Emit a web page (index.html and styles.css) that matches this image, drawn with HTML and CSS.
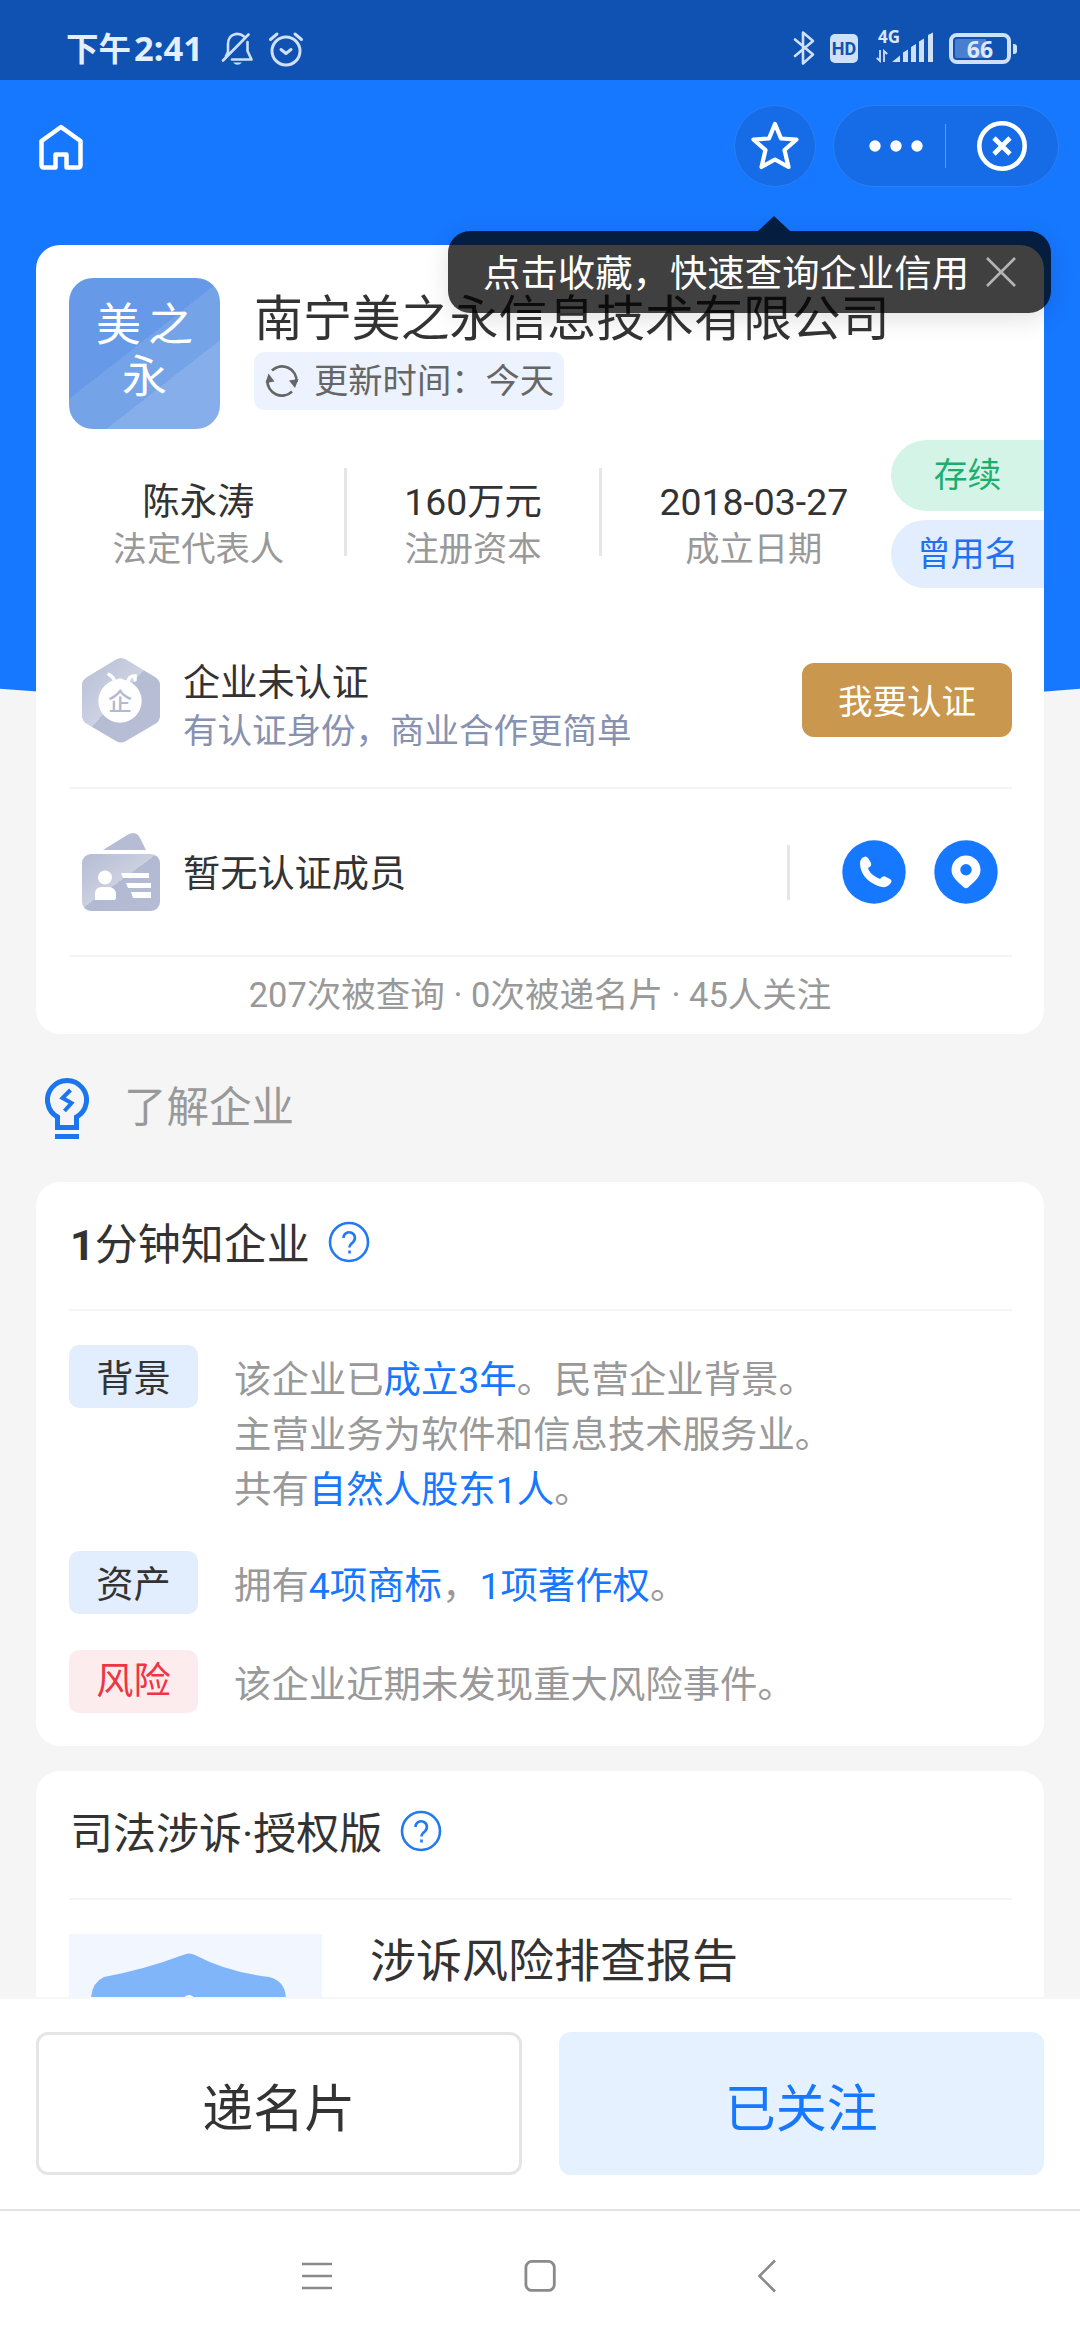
FILE: index.html
```html
<!DOCTYPE html>
<html lang="zh-CN">
<head>
<meta charset="utf-8">
<title>企业信用</title>
<link rel="stylesheet" href="styles.css">
</head>
<body>
<div class="app">
  <header class="status">
    <div class="status-left">
      <span class="clock">下午<b>2:41</b></span>
      <svg class="bell" width="32" height="34" viewBox="0 0 32 34" fill="none" stroke="#cfe0fb" stroke-width="2.6" stroke-linecap="round" stroke-linejoin="round"><path d="M23 4.500C17 -.5 7 2 7 12v8l-2 4M26.500 10v9l4 8.500H11M2 28.500L27.500 2.500"/><path d="M12 30.500h9q-4.500 4.500-9 0z" fill="#cfe0fb" stroke="none"/></svg>
      <svg class="alarm" width="36" height="36" viewBox="0 0 36 36" fill="none" stroke="#cfe0fb" stroke-width="3" stroke-linecap="round" stroke-linejoin="round"><circle cx="18" cy="20" r="14"/><path d="M13 18.500l5 4 5-4M2.500 8.500L9 3M33.500 8.500L27 3"/></svg>
    </div>
    <div class="status-right">
      <svg width="22" height="36" viewBox="0 0 22 36" fill="none" stroke="#cfe0fb" stroke-width="2.600" stroke-linejoin="round" stroke-linecap="round"><path d="M2 9.500l18 15-10 9V2.500l10 8.500-18 15"/></svg>
      <span class="hd">HD</span>
      <span class="net"><span class="net-label">4G</span>
        <svg width="58" height="32" viewBox="0 0 58 32" fill="#cfe0fb"><path d="M16 30l8-6.500V30zM27 20.500l5-3V30h-5zM35 15l5-3v18h-5zM43 9.500l5-3V30h-5zM52 3l5-2.500V30h-5z"/><path d="M4 18v11L.8 26M8 30V19l3.200 3" fill="none" stroke="#cfe0fb" stroke-width="1.800"/></svg></span>
      <span class="battery">66</span>
    </div>
  </header>

  <nav class="topbar">
    <svg class="home" width="46" height="48" viewBox="0 0 46 48" fill="none" stroke="#fff" stroke-width="4.500" stroke-linejoin="round" stroke-linecap="round"><path d="M17.500 44.500H6q-2.500 0-2.500-2.500V18L23 4l19.500 14v24q0 2.500-2.500 2.500H28.500M17.500 44.500V31.500h11v13"/></svg>
    <div class="topbar-actions">
      <span class="round-btn">
        <svg width="50" height="52" viewBox="0 0 50 52" fill="none" stroke="#fff" stroke-width="4.200" stroke-linejoin="round"><path d="M25 4l6 14.500 15.500 1L34.500 30l4 17L25 39.500 11.500 47l4-17L3.500 19.500l15.500-1z"/></svg>
      </span>
      <span class="capsule">
        <svg width="54" height="14" viewBox="0 0 54 14" fill="#fff"><circle cx="6" cy="7" r="5.700"/><circle cx="27" cy="7" r="5.700"/><circle cx="48" cy="7" r="5.700"/></svg>
        <i class="capsule-line"></i>
        <svg width="50" height="52" viewBox="0 0 50 52" fill="none" stroke="#fff" stroke-width="4.600"><circle cx="25" cy="26" r="22.700"/><path d="M17 18l16 16M33 18L17 34"/></svg>
      </span>
    </div>
    <div class="tip">
      <span>点击收藏，快速查询企业信用</span>
      <svg width="30" height="30" viewBox="0 0 30 30" fill="none" stroke="#b4b4b4" stroke-width="2.600"><path d="M1 1l28 28M29 1L1 29"/></svg>
    </div>
  </nav>

  <main class="content">
    <section class="card company">
      <div class="company-head">
        <div class="logo">美之<br>永</div>
        <div>
          <h1 class="company-name">南宁美之永信息技术有限公司</h1>
          <div class="updated">
            <svg width="34" height="34" viewBox="0 0 34 34" fill="none" stroke="#666" stroke-width="2.800"><path d="M7 6.500a14.500 14.500 0 0 1 24.500 11.500M27 27.500a14.500 14.500 0 0 1-24.500-11.500"/><path d="M.5 19l3-9.500 6 8zM33.500 15l-3.500 9-6-7.500z" fill="#666" stroke="none"/></svg>
            <span>更新时间：今天</span>
          </div>
        </div>
      </div>
      <div class="facts">
        <div class="fact"><strong>陈永涛</strong><span>法定代表人</span></div>
        <i class="fact-line"></i>
        <div class="fact"><strong>160万元</strong><span>注册资本</span></div>
        <i class="fact-line"></i>
        <div class="fact fact-date"><strong>2018-03-27</strong><span>成立日期</span></div>
        <div class="labels"><span class="label label-green">存续</span><span class="label label-blue">曾用名</span></div>
      </div>
      <div class="row">
        <svg class="row-icon" width="78" height="86" viewBox="0 0 78 86"><defs><linearGradient id="hex" x1="0" y1="0" x2="1" y2="1"><stop offset="0" stop-color="#b7bed6"/><stop offset=".47" stop-color="#cdd2e2"/><stop offset=".47" stop-color="#b5bcd4"/><stop offset="1" stop-color="#b7bed6"/></linearGradient></defs><path d="M34 2.500q5-3 10 0L73 20q5 3 5 8v31q0 5-5 8L44 84q-5 3-10 0L5 67q-5-3-5-8V28q0-5 5-8z" fill="url(#hex)"/><circle cx="38" cy="44" r="21.700" fill="#fff"/><path d="M28 26l10-5 10 5z" fill="#fff"/><path d="M33 26q-1-6-6-8.500M46 26q0-7 7-7v4" fill="none" stroke="#fff" stroke-width="3.600" stroke-linecap="round"/><text x="38" y="53" class="hex-text">企</text></svg>
        <div class="row-text"><strong>企业未认证</strong><span>有认证身份，商业合作更简单</span></div>
        <button class="verify">我要认证</button>
      </div>
      <div class="row row-members">
        <svg class="row-icon" width="78" height="80" viewBox="0 0 78 80"><defs><linearGradient id="idc" x1="0" y1="0" x2="1" y2="1"><stop offset="0" stop-color="#b5bcd4"/><stop offset=".48" stop-color="#cbd0e0"/><stop offset=".48" stop-color="#b2b9d2"/><stop offset="1" stop-color="#b5bcd4"/></linearGradient></defs><path d="M21 18L46 2.500q9-5 13 5.500l5 10z" fill="#b5bcd4"/><rect y="22" width="78" height="57" rx="9" fill="url(#idc)"/><circle cx="23" cy="45.500" r="7" fill="#fff"/><path d="M13 68V62q0-7 7-7h6q8 0 8 8v3q0 2-2 2z" fill="#fff"/><path d="M39 41h28v5H41zM44 51h25v5H46zM49 60h20v6H51z" fill="#fff"/></svg>
        <div class="row-text"><strong>暂无认证成员</strong></div>
        <div class="contacts">
          <i class="contact-line"></i>
          <svg width="64" height="64" viewBox="0 0 64 64"><circle cx="32" cy="32" r="31.700" fill="#1677ff"/><path d="M20 18q4-3 6 0l3 5q1 3-3 5 1 5 8 9l4 2q3-4 6-2l4 2q3 2 0 5-4 5-12 2Q19 39 18 24q0-4 2-6z" fill="#fff"/></svg>
          <svg width="64" height="64" viewBox="0 0 64 64"><circle cx="32" cy="32" r="31.700" fill="#1677ff"/><path fill-rule="evenodd" d="M32 15.500A14.500 14.500 0 0 1 46.500 30c0 6-4 10-12.500 17.500q-2 1.500-4 0C21.500 40 17.500 36 17.500 30A14.500 14.500 0 0 1 32 15.500zM32 24a5.700 5.700 0 1 0 0 11.400A5.700 5.700 0 0 0 32 24z" fill="#fff"/></svg>
        </div>
      </div>
      <p class="counts">207次被查询 · 0次被递名片 · 45人关注</p>
    </section>

    <div class="section-title">
      <svg width="44" height="64" viewBox="0 0 44 64" fill="none" stroke="#1b75ee" stroke-width="5"><path d="M12.500 51.500V41A19.500 19.500 0 1 1 31.500 41v10.500zM10 60.500h24"/><path d="M25.500 14l-8 8 9 5-7 8" stroke-width="4"/></svg>
      <span>了解企业</span>
    </div>

    <section class="card brief">
      <h2 class="card-title"><span><b>1</b>分钟知企业</span>
        <svg class="help" width="42" height="42" viewBox="0 0 42 42" fill="none" stroke="#2379f0" stroke-width="2.600"><circle cx="21" cy="21" r="19"/><path d="M15.500 17a5.700 5.700 0 1 1 9.500 4.200q-3.500 2.800-3.500 5.300"/><path d="M21.500 29.500v3"/></svg></h2>
      <dl class="items">
        <dt>背景</dt><dd>该企业已<em>成立3年</em>。民营企业背景。<br>主营业务为软件和信息技术服务业。<br>共有<em>自然人股东1人</em>。</dd>
        <dt>资产</dt><dd>拥有<em>4项商标</em>，<em>1项著作权</em>。</dd>
        <dt class="risk">风险</dt><dd>该企业近期未发现重大风险事件。</dd>
      </dl>
    </section>

    <section class="card lawsuit">
      <h2 class="card-title"><span>司法涉诉·授权版</span>
        <svg class="help" width="42" height="42" viewBox="0 0 42 42" fill="none" stroke="#2379f0" stroke-width="2.600"><circle cx="21" cy="21" r="19"/><path d="M15.500 17a5.700 5.700 0 1 1 9.500 4.200q-3.500 2.800-3.500 5.300"/><path d="M21.500 29.500v3"/></svg></h2>
      <div class="report">
        <svg width="253" height="190" viewBox="0 0 253 190"><rect width="253" height="190" fill="#f2f7ff"/><path d="M114 21q6-3 12 0 32 17 74 22 17 4 17 23v80H22V66q0-17 13-23 42-8 79-22z" fill="#80b5f9"/><circle cx="120" cy="67" r="6" fill="#fff"/></svg>
        <h3>涉诉风险排查报告</h3>
      </div>
    </section>
  </main>

  <footer class="actions">
    <button class="action">递名片</button>
    <button class="action action-on">已关注</button>
  </footer>
  <div class="sysnav">
    <svg width="32" height="34" viewBox="0 0 32 34" stroke="#8a8a8a" stroke-width="2.600"><path d="M1 5h30M1 17h30M1 29h30"/></svg>
    <svg width="32" height="34" viewBox="0 0 32 34" fill="none" stroke="#8a8a8a" stroke-width="2.800"><rect x="1.900" y="2.400" width="28.400" height="29" rx="6"/></svg>
    <svg width="20" height="34" viewBox="0 0 20 34" fill="none" stroke="#8a8a8a" stroke-width="2.600" stroke-linejoin="round"><path d="M18 1.500L2.500 17 18 32.500"/></svg>
  </div>
</div>
</body>
</html>
```
FILE: styles.css
```css
* { box-sizing: border-box; }
body { margin: 0; background: #f5f5f5; font-family: Roboto, "Noto Sans CJK SC", sans-serif; color: #333; }
h1, h2, h3, p, dl, dd { margin: 0; font-weight: 400; }
strong, em, i { font-weight: 400; font-style: normal; }
svg { display: block; flex: none; }
button { font: inherit; border: 0; padding: 0; }

.app { position: relative; width: 1080px; height: 2340px; display: flex; flex-direction: column; overflow: hidden; isolation: isolate; }
.app::before { content: ""; position: absolute; z-index: -1; left: 0; top: 0; width: 100%; height: 711px; background: #1677ff; clip-path: circle(6600px at 50% calc(100% - 6600px)); }

/* status bar */
.status { height: 80px; flex: none; background: #1052b1; display: flex; justify-content: space-between; padding: 18px 64px 0 66px; color: #dce8fc; }
.status-left, .status-right { display: flex; align-items: center; height: 62px; }
.clock { font-family: "Noto Sans CJK SC", sans-serif; font-weight: 700; font-size: 32.500px; line-height: 62px; color: #e4eefd; padding-bottom: 3px; }
.clock b { font-family: "Noto Sans", sans-serif; font-weight: 700; font-size: 34.500px; margin-left: 3px; }
.bell { margin-left: 18px; }
.alarm { margin-left: 15px; }
.hd { width: 28px; height: 29px; margin-left: 15px; border-radius: 5px; background: #cfe0fb; color: #1052b1; font: 700 18px/29px Roboto, sans-serif; text-align: center; }
.net { position: relative; margin-left: 18px; width: 58px; }
.net-label { position: absolute; left: 2px; top: -4px; font: 700 17px/17px "Noto Sans", sans-serif; }
.battery { position: relative; width: 62px; height: 31px; margin-left: 15px; margin-right: -5px; border: 4px solid #cfe0fb; border-radius: 8px; background: linear-gradient(90deg, #4a7fd0 62%, transparent 62%) content-box; padding: 2px; font: 700 23px/20px "Noto Sans", sans-serif; text-align: center; }
.battery::after { content: ""; position: absolute; right: -10px; top: 7px; width: 4px; height: 10px; border-radius: 0 3px 3px 0; background: #cfe0fb; }
.status-right { margin-right: 10px; padding-bottom: 2px; }

/* top bar */
.topbar { position: relative; z-index: 2; height: 165px; flex: none; display: flex; justify-content: space-between; padding: 25px 21px 0 38px; }
.home { margin-top: 18px; }
.topbar-actions { display: flex; gap: 17px; height: 82px; }
.round-btn, .capsule { display: flex; align-items: center; justify-content: center; height: 82px; border-radius: 41px; background: #166ce6; border: 1px solid #2d7ff2; }
.round-btn { width: 82px; }
.capsule { width: 226px; justify-content: flex-start; padding-left: 35px; }
.capsule-line { width: 1px; height: 44px; margin: 0 31px 0 22px; background: #5c9bf4; }
.tip { position: absolute; left: 448px; top: 151px; width: 603px; height: 82px; padding: 0 35px; display: flex; align-items: center; justify-content: space-between; border-radius: 22px; background: rgba(0, 0, 0, .75); color: #fff; font-size: 37.400px; white-space: nowrap; box-shadow: 0 6px 24px rgba(0, 0, 0, .12); }
.tip span { padding-bottom: 3px; }
.tip::before { content: ""; position: absolute; left: 310px; top: -15px; border: solid transparent; border-width: 0 16px 15px; border-bottom-color: rgba(0, 0, 0, .75); }

/* cards */
.content { height: 1752px; flex: none; padding: 0 36px; overflow: hidden; }
.card { background: #fff; border-radius: 24px; }
.company { height: 789px; padding-top: 33px; }
.company-head { display: flex; gap: 34px; padding-left: 33px; height: 151px; }
.logo { width: 151px; height: 151px; flex: none; border-radius: 24px; padding: 22px 0 0 7px; background: linear-gradient(142deg, #6699e7 0 45%, #75a3e8 45% 67%, #86aeea 67%); color: #fff; font-size: 45px; line-height: 52px; letter-spacing: 7px; text-align: center; }
.company-name { padding-top: 8px; height: 74px; font-size: 48.900px; line-height: 68px; white-space: nowrap; }
.updated { display: flex; align-items: center; gap: 15px; width: 310px; height: 58px; padding-left: 11px; border-radius: 10px; background: #edf3fe; color: #666; font-size: 34.300px; white-space: nowrap; }
.updated span { padding-bottom: 6px; }
.facts { display: flex; height: 148px; margin: 11px 0 0 17px; }
.fact { width: 291px; padding-top: 39px; display: flex; flex-direction: column; align-items: center; font-size: 37.400px; line-height: 47px; }
.fact + .fact-line + .fact { width: 253px; }
.fact + .fact-line + .fact-date { width: 289px; padding-left: 14px; }
.fact span { font-size: 34.300px; color: #999; }
.fact-line { width: 3px; height: 88px; margin-top: 28px; background: #e6e6e6; }
.labels { display: flex; flex-direction: column; gap: 9px; width: 153px; margin-left: auto; }
.label { height: 71px; line-height: 71px; border-radius: 36px 0 0 36px; text-align: center; font-size: 33.800px; }
.label-green { background: #d4f4e8; color: #1cae6e; }
.label-blue { height: 68px; line-height: 70px; background: #e2edfd; color: #1f72f0; }
.row { display: flex; align-items: center; height: 177px; margin: 24px 32px 0 33px; padding-left: 13px; border-bottom: 2px solid #f5f5f5; }
.row-members { height: 168px; margin-top: 0; }
.row-icon { margin-right: 23px; }
.row-text { display: flex; flex-direction: column; font-size: 37.200px; line-height: 48px; padding-top: 14px; }
.row-members .row-text { padding-top: 3px; }
.row-text span { font-size: 34.500px; color: #8791b0; }
.hex-text { font: 500 24px "Noto Sans CJK SC", sans-serif; fill: #b2b9d2; text-anchor: middle; }
.verify { width: 210px; height: 74px; margin-left: auto; border-radius: 12px; background: #c9974d; color: #fff; font-size: 34.500px; line-height: 79px; }
.contacts { display: flex; align-items: center; margin-left: auto; margin-right: 14px; gap: 28px; }
.contact-line { width: 3px; height: 55px; margin-right: 24px; background: #e6e6e6; }
.counts { text-align: center; color: #999; font-size: 34.500px; line-height: 77px; }

.section-title { display: flex; align-items: center; gap: 35px; height: 148px; padding-left: 9px; color: #999; font-size: 42.500px; }
.section-title span { padding-bottom: 9px; }
.brief { height: 564px; margin-bottom: 25px; }
.card-title { display: flex; align-items: center; gap: 18px; height: 129px; margin: 0 32px 0 33px; padding-left: 1px; border-bottom: 2px solid #f5f5f5; font-size: 43px; }
.card-title span { padding-bottom: 10px; }
.card-title .help { margin-bottom: 8px; }
.items { display: grid; grid-template-columns: 129px 1fr; column-gap: 36px; padding: 34px 33px 0; align-items: start; }
.items dt { height: 63px; border-radius: 10px; background: #e2edfd; font-size: 37.200px; line-height: 68px; text-align: center; }
.items dt.risk { background: #fdeced; color: #f03444; line-height: 63px; }
.items dd { padding-top: 8px; margin-bottom: 33px; font-size: 37.400px; line-height: 55px; color: #999; }
.items dd:nth-of-type(2) { margin-bottom: 36px; }
.items em { color: #1677ff; }
.report { display: flex; gap: 48px; padding: 34px 33px 0; }
.report h3 { font-size: 46px; line-height: 54px; white-space: nowrap; }

/* bottom actions */
.actions { height: 212px; flex: none; display: flex; gap: 37px; padding: 33px 36px 0; background: #fff; border-top: 2px solid #f7f7f7; }
.action { flex: 1; height: 143px; display: flex; align-items: center; justify-content: center; padding-top: 13px; border: 3px solid #e5e5e5; border-radius: 12px; background: #fff; color: #333; font-size: 51px; line-height: 130px; }
.action-on { border-color: #e6f1ff; background: #e6f1ff; color: #1677ff; }
.sysnav { flex: 1; display: flex; align-items: flex-start; padding: 48px 0 0 301px; gap: 191px; background: #fff; border-top: 2px solid #e3e3e3; }
.sysnav svg:last-child { margin-left: 10px; }
```
